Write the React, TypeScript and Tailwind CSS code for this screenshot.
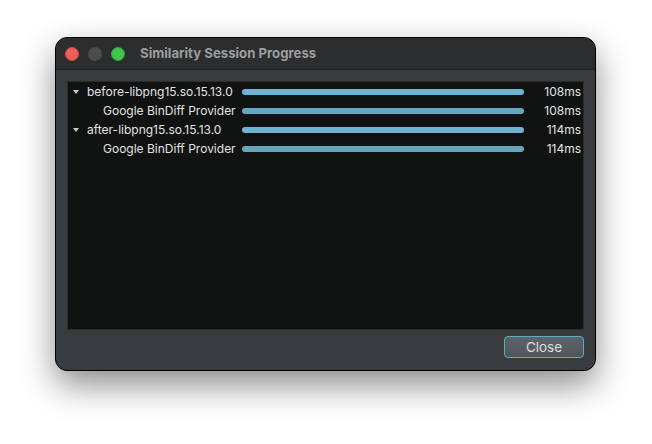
const rows = [
  { label: "before-libpng15.so.15.13.0", time: "108ms", parent: true },
  { label: "Google BinDiff Provider", time: "108ms", parent: false },
  { label: "after-libpng15.so.15.13.0", time: "114ms", parent: true },
  { label: "Google BinDiff Provider", time: "114ms", parent: false },
];

export default function App() {
  return (
    <div
      className="h-[444px] w-[652px] overflow-hidden bg-white pl-[55px] pt-[37px]"
      style={{ fontFamily: "Inter, 'Noto Sans', sans-serif" }}
    >
      <div className="flex h-[334px] w-[541px] flex-col overflow-hidden rounded-[12px] border border-black bg-[#393c3e] shadow-[0_14px_34px_rgba(0,0,0,0.45)]">
        {/* title bar */}
        <div className="relative flex h-[32px] shrink-0 items-center border-b border-[#222425] bg-[#2b2d2e]">
          <div className="flex items-center gap-[9px] pl-[9px]">
            <span className="h-[14px] w-[14px] rounded-full border border-[#d7473f] bg-[#ef5f58]" />
            <span className="h-[14px] w-[14px] rounded-full bg-[#4a4c4e]" />
            <span className="h-[14px] w-[14px] rounded-full border border-[#2ea83b] bg-[#3fc44c]" />
          </div>
          <span className="ml-[15px] text-[13.2px] font-bold text-[#9b9d9e]">
            Similarity Session Progress
          </span>
        </div>

        {/* body */}
        <div className="flex flex-1 flex-col px-[11px] pt-[11px]">
          <div className="h-[249px] border border-[#2a2c2d] bg-[#111313]">
            {rows.map((r, i) => (
              <div key={i} className="flex h-[19px] items-center text-[12px] text-[#e2e2e2]">
                <div className="flex w-[173px] shrink-0 items-center">
                  {r.parent ? (
                    <>
                      <span className="ml-[5px] mr-[8px] h-0 w-0 border-x-[3.5px] border-t-[4px] border-x-transparent border-t-[#c9c9c9]" />
                      <span className="whitespace-nowrap">{r.label}</span>
                    </>
                  ) : (
                    <span className="ml-[35px] whitespace-nowrap">{r.label}</span>
                  )}
                </div>
                <div
                  className={`ml-[1px] h-[6px] w-[282px] rounded-full ${
                    r.parent ? "bg-[#6cb4d2]" : "bg-[#67a6c0]"
                  }`}
                />
                <span className="w-[58px] pr-[1px] text-right">{r.time}</span>
              </div>
            ))}
          </div>
          <div className="flex justify-end pt-[6px]">
            <button className="h-[22px] w-[80px] rounded-[4px] border border-[#5fa9c9] bg-gradient-to-b from-[#5d656a] to-[#50575b] text-[13.5px] text-[#dedede]">
              Close
            </button>
          </div>
        </div>
      </div>
    </div>
  );
}
